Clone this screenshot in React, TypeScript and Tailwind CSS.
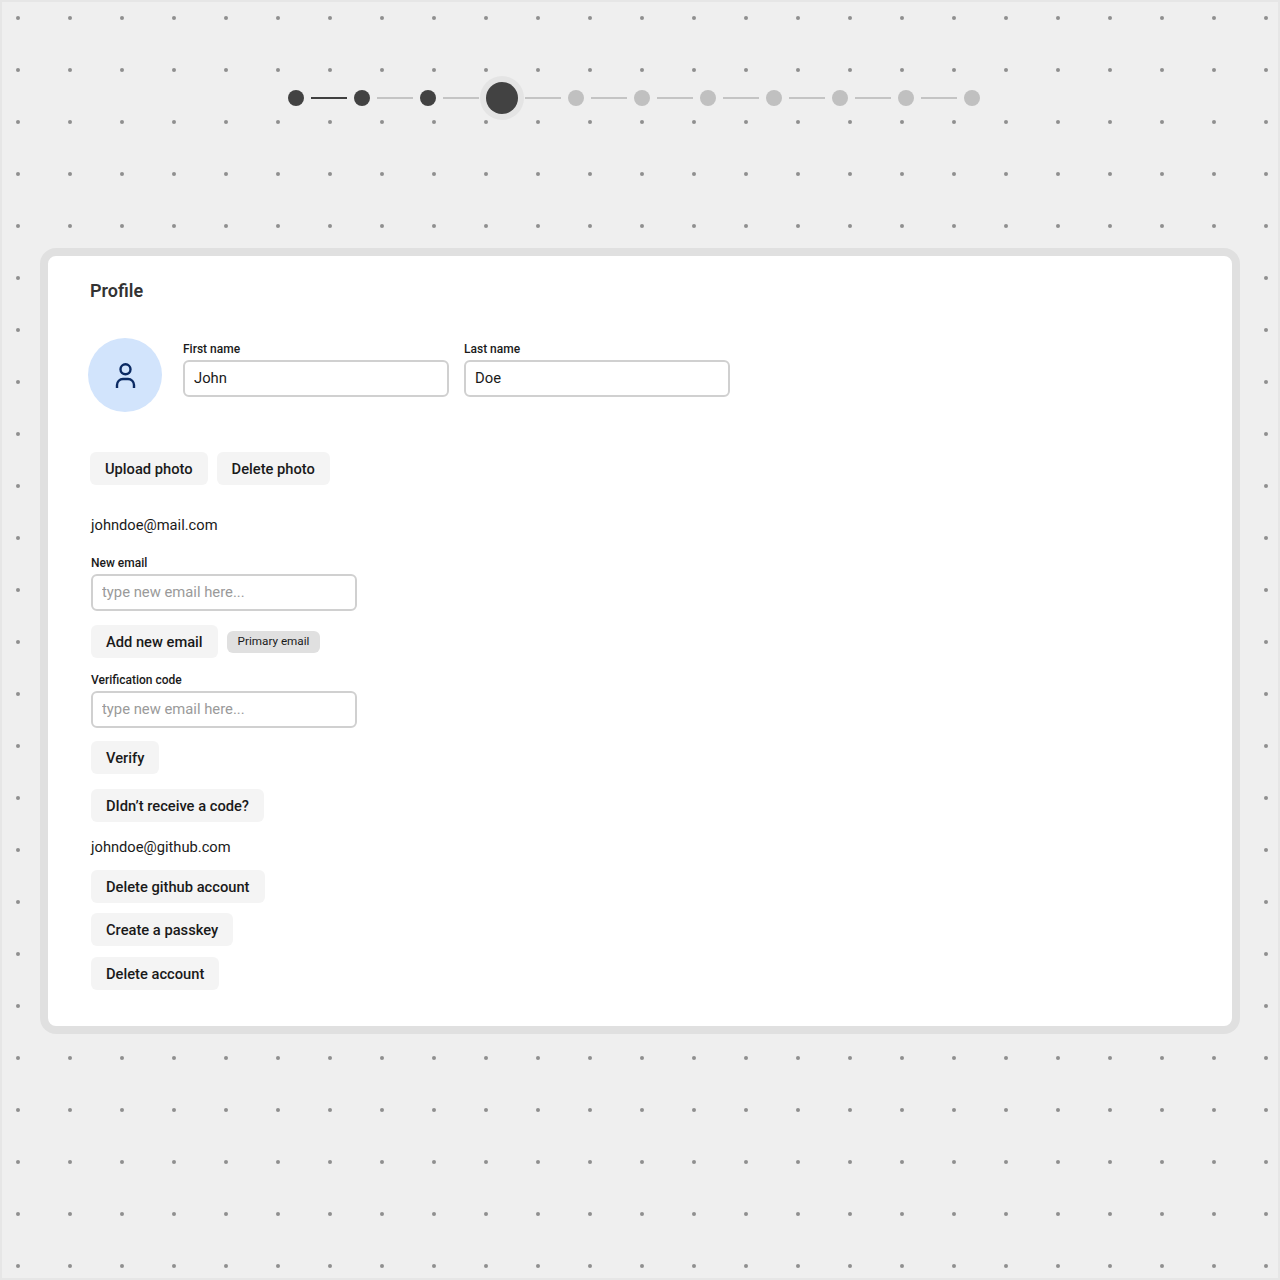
const steps = [
  { size: 'small', on: true },
  { size: 'small', on: true },
  { size: 'small', on: true },
  { size: 'large', on: true },
  { size: 'small', on: false },
  { size: 'small', on: false },
  { size: 'small', on: false },
  { size: 'small', on: false },
  { size: 'small', on: false },
  { size: 'small', on: false },
  { size: 'small', on: false },
];

function Stepper() {
  return (
    <div className="ml-[286px] flex h-11 items-center gap-[7px]">
      {steps.map((step, i) => (
        <div key={i} className="flex items-center gap-[7px]">
          {i > 0 && <div className={`h-[2px] w-9 ${i === 1 ? 'bg-[#404040]' : 'bg-[#c4c4c4]'}`}></div>}
          {step.size === 'large' ? (
            <div className="h-8 w-8 rounded-full bg-[#424242] shadow-[0_0_0_6px_#e4e4e4]"></div>
          ) : (
            <div className={`h-4 w-4 rounded-full ${step.on ? 'bg-[#424242]' : 'bg-[#c0c0c0]'}`}></div>
          )}
        </div>
      ))}
    </div>
  );
}

function Btn({ children, className = '' }: { children: string; className?: string }) {
  return (
    <button className={`flex h-[33px] w-fit items-center rounded-md bg-[#f4f4f4] px-[15px] pt-[1px] text-[14.7px] font-medium text-[#1a1a1a] ${className}`}>
      {children}
    </button>
  );
}

function Field({ label, value, placeholder, className = '' }: { label: string; value?: string; placeholder?: string; className?: string }) {
  return (
    <label className={`flex w-[266px] flex-col ${className}`}>
      <span className="mb-[5px] h-[14px] pt-[1px] text-xs leading-[14px] font-medium text-[#1a1a1a]">{label}</span>
      <input
        defaultValue={value}
        placeholder={placeholder}
        className="h-[37px] w-full rounded-md border-2 border-[#d0d0d0] bg-white px-[9px] pb-[2px] text-[14.8px] text-[#1a1a1a] outline-none placeholder:text-[#9a9a9a]"
      />
    </label>
  );
}

export default function App() {
  return (
    <div className="h-[1280px] w-[1280px] border-2 border-[#e6e6e6] bg-[#efefef] bg-[radial-gradient(circle,#8f8f8f_1.4px,transparent_2.5px)] bg-[size:52px_52px] bg-[position:-10px_-10px] pt-[74px] font-['Roboto',sans-serif]">
      <Stepper />

      <main className="mt-[128px] ml-[38px] h-[786px] w-[1200px] rounded-2xl border-8 border-[#e0e0e0] bg-white pt-[24px] pl-[40px]">
        <h1 className="ml-[2px] text-lg leading-[21px] font-semibold text-[#333333]">Profile</h1>

        <div className="mt-[37px] flex items-start">
          <div className="flex h-[74px] w-[74px] items-center justify-center rounded-full bg-[#d2e4fc]">
            <svg width="28" height="28" viewBox="0 0 28 28" fill="none" stroke="#0b2a63" strokeWidth="2.4">
              <circle cx="14.5" cy="8.3" r="5" />
              <path d="M6 27v-3a6 6 0 0 1 6-6h5a6 6 0 0 1 6 6v3" />
            </svg>
          </div>
          <div className="mt-[3px] ml-[21px] flex gap-[15px]">
            <Field label="First name" value="John" />
            <Field label="Last name" value="Doe" />
          </div>
        </div>

        <div className="mt-[40px] ml-[2px] flex gap-[9px]">
          <Btn>Upload photo</Btn>
          <Btn>Delete photo</Btn>
        </div>

        <div className="ml-[3px] flex flex-col">
          <p className="mt-[30px] text-[14.7px] leading-[20px] text-[#1a1a1a]">johndoe@mail.com</p>
          <Field label="New email" placeholder="type new email here..." className="mt-[20px]" />
          <div className="mt-[14px] flex items-center gap-[9px]">
            <Btn>Add new email</Btn>
            <span className="flex h-[22px] items-center rounded-md bg-[#e0e0e0] px-[11px] text-[11.7px] text-[#1a1a1a]">Primary email</span>
          </div>
          <Field label="Verification code" placeholder="type new email here..." className="mt-[14px]" />
          <Btn className="mt-[13px]">Verify</Btn>
          <Btn className="mt-[15px]">DIdn’t receive a code?</Btn>
          <p className="mt-[15px] text-[14.7px] leading-[20px] text-[#1a1a1a]">johndoe@github.com</p>
          <Btn className="mt-[13px]">Delete github account</Btn>
          <Btn className="mt-[10px]">Create a passkey</Btn>
          <Btn className="mt-[11px]">Delete account</Btn>
        </div>
      </main>
    </div>
  );
}
